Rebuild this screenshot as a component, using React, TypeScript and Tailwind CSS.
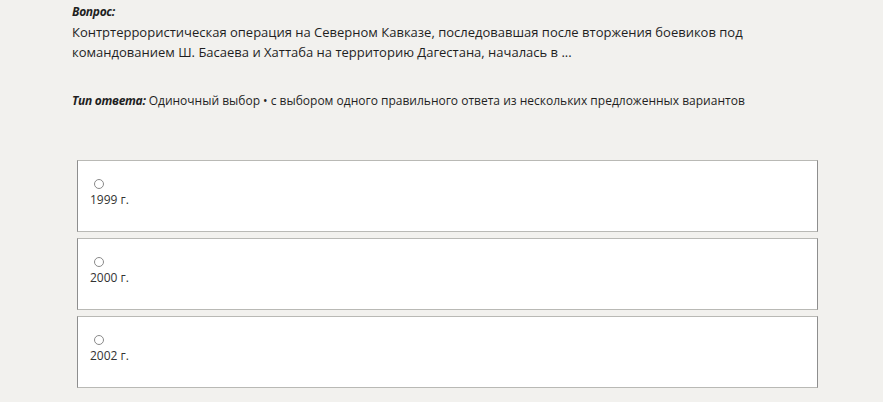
const options = ['1999 г.', '2000 г.', '2002 г.'];

export default function App() {
  return (
    <div className="min-h-[402px] w-[883px] bg-[#f2f1ee] text-[#1f1f1f]" style={{ fontFamily: '"Open Sans", "Noto Sans", sans-serif' }}>
      <div className="pl-[72px] pr-6 pt-[2px] text-[13px] leading-[20px]">
        <div className="font-bold italic text-[12px] tracking-[-0.3px]">Вопрос:</div>
        <div>
          Контртеррористическая операция на Северном Кавказе, последовавшая после вторжения боевиков под
          <br />
          командованием Ш. Басаева и Хаттаба на территорию Дагестана, началась в ...
        </div>
        <div className="mt-[29px] text-[12px]">
          <span className="font-bold italic tracking-[-0.3px]">Тип ответа:</span> Одиночный выбор • с выбором одного правильного ответа из нескольких предложенных вариантов
        </div>
      </div>

      <div className="ml-[77px] mt-[49px] flex w-[741px] flex-col gap-[6px]">
        {options.map((opt) => (
          <div
            key={opt}
            className="h-[72px] border border-x-[#8e8e8e] border-y-[#b9b9b5] bg-white px-[12px] pt-[18px]"
          >
            <div className="ml-[4px] h-[10px] w-[10px] rounded-full border border-[#8a8a8a] bg-white" />
            <div className="mt-[3px] text-[12px] leading-[16px] text-[#333]">{opt}</div>
          </div>
        ))}
      </div>
    </div>
  );
}
